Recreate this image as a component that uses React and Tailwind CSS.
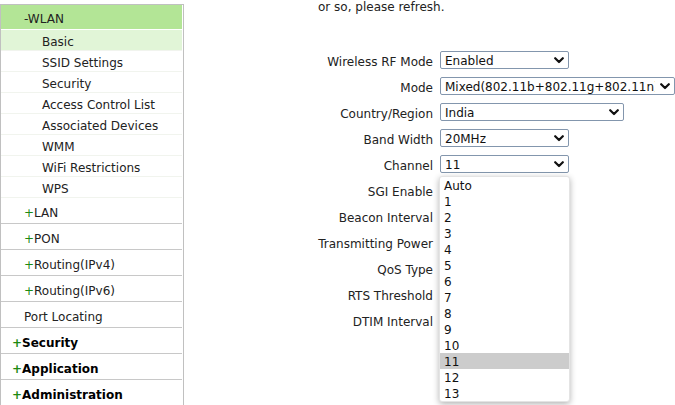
const subItems = ["Basic", "SSID Settings", "Security", "Access Control List", "Associated Devices", "WMM", "WiFi Restrictions", "WPS"];
const groups = [
  { label: "LAN", plus: true },
  { label: "PON", plus: true },
  { label: "Routing(IPv4)", plus: true },
  { label: "Routing(IPv6)", plus: true },
  { label: "Port Locating", plus: false },
];
const topGroups = ["Security", "Application", "Administration"];
const channels = ["Auto", "1", "2", "3", "4", "5", "6", "7", "8", "9", "10", "11", "12", "13"];

function Chevron() {
  return (
    <svg width="10" height="7" viewBox="0 0 10 7" className="shrink-0 ml-auto">
      <polyline points="1.2,1.2 5,5 8.8,1.2" fill="none" stroke="#111" strokeWidth="2.2" strokeLinecap="round" strokeLinejoin="round" />
    </svg>
  );
}

function Select({ value, width, textWidth, children }) {
  return (
    <div className="relative" style={{ width }}>
      <div className="h-[18px] w-full flex items-center border border-[#8396ad] rounded-[2px] bg-white pl-[4px] pr-[4px] overflow-hidden">
        <span
          className="whitespace-nowrap overflow-hidden text-[#111] pt-[1px]"
          style={textWidth ? { width: textWidth } : undefined}
        >
          {value}
        </span>
        <Chevron />
      </div>
      {children}
    </div>
  );
}

function Sidebar() {
  return (
    <div className="w-[184px] shrink-0 mt-[4px] border-l border-r border-t border-[#c0c0c0] pr-px text-[12px] text-[#222]">
      <div className="h-[25px] flex items-center pl-[23px] pt-[4px] bg-[#b3e596] border-b border-white">-WLAN</div>
      {subItems.map((s, i) => (
        <div
          key={s}
          className={`h-[21px] flex items-center pl-[41px] pt-[4px] border-b border-[#f1f4ee] ${i === 0 ? "bg-[#e1f5d7]" : ""}`}
        >
          {s}
        </div>
      ))}
      {groups.map((g) => (
        <div key={g.label} className="h-[26px] flex items-center pl-[23px] pt-[5px] border-b border-[#c8c8c8]">
          {g.plus && <span className="text-[#1d8a12]">+</span>}
          {g.label}
        </div>
      ))}
      {topGroups.map((g) => (
        <div key={g} className="h-[26px] flex items-center pl-[11px] pt-[5px] border-b border-[#c8c8c8] font-bold text-black">
          <span className="text-[#1d8a12]">+</span>
          {g}
        </div>
      ))}
    </div>
  );
}

function Row({ label, children }) {
  return (
    <div className="h-[26px] flex items-center">
      <div className="w-[256px] shrink-0 text-right pr-[7px] pt-[3px] whitespace-nowrap">{label}</div>
      {children}
    </div>
  );
}

export default function App() {
  return (
    <div
      className="w-[675px] h-[405px] overflow-hidden bg-white flex text-[12px]"
      style={{ fontFamily: '"DejaVu Sans", Verdana, sans-serif' }}
    >
      <Sidebar />
      <div className="flex-1 flex flex-col text-[#222]">
        <div className="h-[14px] leading-[14px] pl-[134px]">or so, please refresh.</div>
        <div className="mt-[33px] flex flex-col">
          <Row label="Wireless RF Mode">
            <Select value="Enabled" width={129} />
          </Row>
          <Row label="Mode">
            <Select value="Mixed(802.11b+802.11g+802.11n)" width={235} textWidth={210} />
          </Row>
          <Row label="Country/Region">
            <Select value="India" width={184} />
          </Row>
          <Row label="Band Width">
            <Select value="20MHz" width={129} />
          </Row>
          <Row label="Channel">
            <Select value="11" width={129}>
              <div className="absolute left-[-1px] top-[21px] w-[131px] z-10 bg-white rounded-[3px] border border-[#e4e4e4] shadow-[0_2px_6px_rgba(0,0,0,0.3)] overflow-hidden">
                {channels.map((c) => (
                  <div
                    key={c}
                    className={`h-[16px] leading-[16px] pl-[4px] pt-[1px] text-[#111] ${c === "11" ? "bg-[#cccccc]" : ""}`}
                  >
                    {c}
                  </div>
                ))}
              </div>
            </Select>
          </Row>
          <Row label="SGI Enable" />
          <Row label="Beacon Interval" />
          <Row label="Transmitting Power" />
          <Row label="QoS Type" />
          <Row label="RTS Threshold" />
          <Row label="DTIM Interval" />
        </div>
      </div>
    </div>
  );
}
